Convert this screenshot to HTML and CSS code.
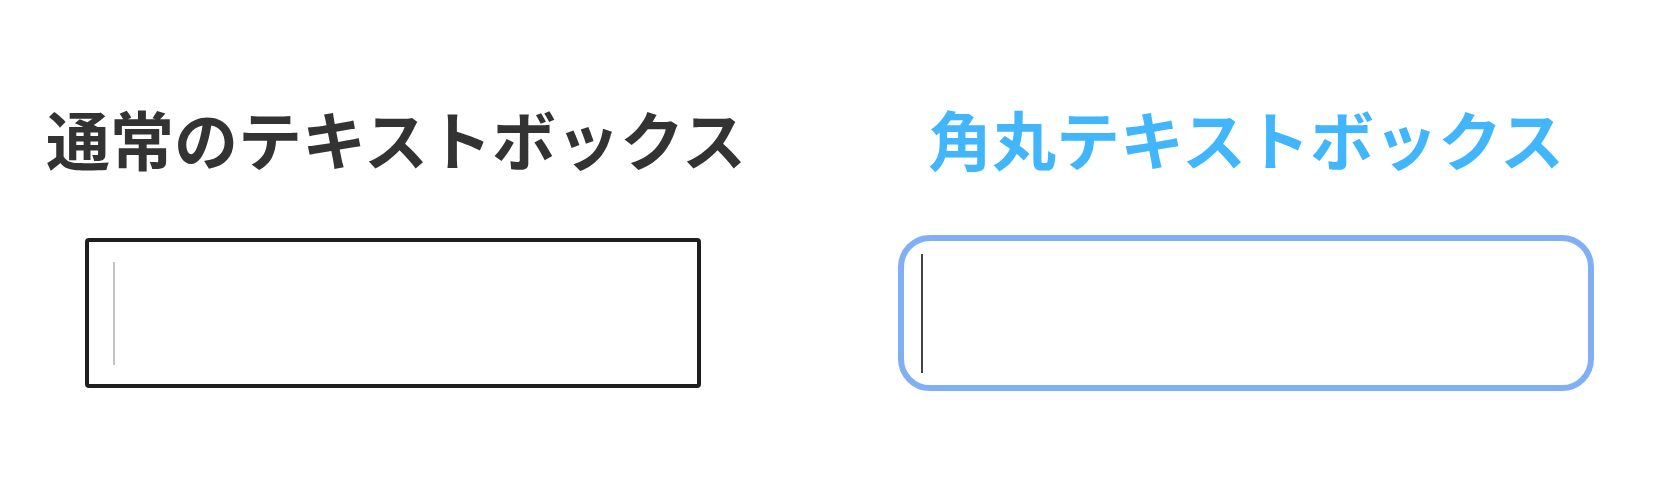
FILE: index.html
```html
<!DOCTYPE html>
<html lang="ja">
<head>
<meta charset="utf-8">
<title>テキストボックス</title>
<link rel="stylesheet" href="styles.css">
</head>
<body>
<main class="page">
  <section class="col col-normal">
    <h2 class="title title-normal">通常のテキストボックス</h2>
    <div class="box box-normal"><span class="caret caret-light"></span></div>
  </section>
  <section class="col col-round">
    <h2 class="title title-round">角丸テキストボックス</h2>
    <div class="box box-round"><span class="caret caret-dark"></span></div>
  </section>
</main>
</body>
</html>
```

FILE: styles.css
```css
html, body {
  margin: 0;
  padding: 0;
  background: #ffffff;
}
.page {
  display: flex;
  align-items: flex-start;
  padding: 97px 0 0 47px;
  gap: 159px;
  font-family: "Noto Sans CJK JP", "Noto Sans", sans-serif;
}
.col {
  display: flex;
  flex-direction: column;
  align-items: center;
}
.col-normal { width: 692px; }
.col-round { width: 696px; }
.title {
  margin: 0;
  font-size: 64px;
  line-height: 80px;
  font-weight: 700;
  letter-spacing: 0;
  white-space: nowrap;
}
.title-normal { color: #333333; padding-left: 6px; }
.title-round { color: #41b6fc; }
.box {
  box-sizing: border-box;
  display: flex;
  align-items: center;
  background: #fff;
}
.box-normal {
  width: 616px;
  height: 150px;
  border: 4px solid #1e1e1e;
  border-radius: 4px;
  padding-left: 24px;
  margin-top: 61px;
}
.box-round {
  width: 696px;
  height: 156px;
  border: 6px solid #80aff5;
  border-radius: 32px;
  padding-left: 17px;
  margin-top: 58px;
}
.caret {
  display: block;
  width: 2px;
}
.caret-light {
  height: 103px;
  background: #c4c4c4;
}
.caret-dark {
  height: 119px;
  background: #444444;
}
```
